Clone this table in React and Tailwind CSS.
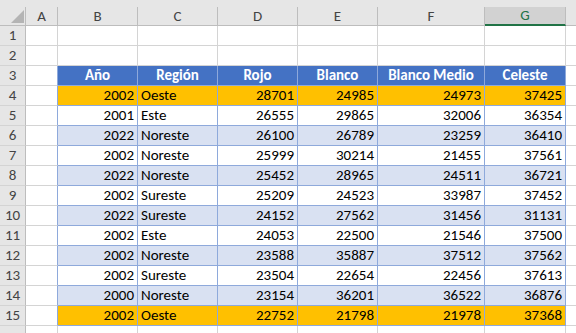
import React from "react";

const FONT = { fontFamily: "Calibri, Carlito, Lato, 'Liberation Sans', sans-serif" };

// column widths incl. right border: row numbers, A..G
const widths = ["w-[26px]", "w-[32px]", "w-[80px]", "w-[80px]", "w-[80px]", "w-[80px]", "w-[107px]", "w-[81px]"];

const letters = ["A", "B", "C", "D", "E", "F", "G"];

const headers = ["Año", "Región", "Rojo", "Blanco", "Blanco Medio", "Celeste"];

const rows = [
  [2002, "Oeste", 28701, 24985, 24973, 37425],
  [2001, "Este", 26555, 29865, 32006, 36354],
  [2022, "Noreste", 26100, 26789, 23259, 36410],
  [2002, "Noreste", 25999, 30214, 21455, 37561],
  [2022, "Noreste", 25452, 28965, 24511, 36721],
  [2002, "Sureste", 25209, 24523, 33987, 37452],
  [2022, "Sureste", 24152, 27562, 31456, 31131],
  [2002, "Este", 24053, 22500, 21546, 37500],
  [2002, "Noreste", 23588, 35887, 37512, 37562],
  [2002, "Sureste", 23504, 22654, 22456, 37613],
  [2000, "Noreste", 23154, 36201, 36522, 36876],
  [2002, "Oeste", 22752, 21798, 21978, 37368],
];

const RowNum = ({ n }) => (
  <div className="w-[26px] h-full shrink-0 flex items-center justify-center bg-[#e6e6e6] text-[#444] border-r border-b border-r-[#bdbdbd] border-b-[#d4d4d4]">
    {n}
  </div>
);

const Empty = ({ w, blueRight }) => (
  <div
    className={`${w} h-full shrink-0 border-b border-r border-b-[#d4d4d4] ${
      blueRight ? "border-r-[#8ea9db]" : "border-r-[#d4d4d4]"
    }`}
  />
);

const BlankRow = ({ n }) => (
  <div className="flex h-[20px]">
    <RowNum n={n} />
    {widths.slice(1).map((w, i) => (
      <Empty key={i} w={w} />
    ))}
    <div className="flex-1 h-full border-b border-[#d4d4d4]" />
  </div>
);

export default function App() {
  return (
    <div className="w-[576px] h-[333px] overflow-hidden bg-white text-[15px] leading-none text-black" style={FONT}>
      {/* column letters */}
      <div className="h-[7px] bg-[#e6e6e6]" />
      <div className="flex h-[19px] bg-[#e6e6e6] text-[#444]">
        <div className="w-[26px] shrink-0 flex items-end justify-end pr-[1px] pb-[2px] border-r border-b border-[#bdbdbd]">
          <svg width="13" height="13" viewBox="0 0 13 13">
            <polygon points="0,13 13,13 13,0" fill="#b4b4b4" />
          </svg>
        </div>
        {letters.map((l, i) =>
          l === "G" ? (
            <div
              key={l}
              className={`${widths[i + 1]} shrink-0 flex items-center justify-center bg-[#d2d2d2] text-[#217346] border-r border-r-[#bdbdbd] border-b-2 border-b-[#217346]`}
            >
              {l}
            </div>
          ) : (
            <div
              key={l}
              className={`${widths[i + 1]} shrink-0 flex items-center justify-center border-r border-b border-[#bdbdbd]`}
            >
              {l}
            </div>
          )
        )}
        <div className="flex-1 border-b border-[#bdbdbd]" />
      </div>

      <BlankRow n={1} />
      <BlankRow n={2} />

      {/* table header */}
      <div className="flex h-[20px]">
        <RowNum n={3} />
        <Empty w={widths[1]} blueRight />
        {headers.map((h, i) => (
          <div
            key={h}
            className={`${widths[i + 2]} shrink-0 flex items-center justify-center font-bold text-white bg-[#4472c4] border-r border-b border-[#8ea9db]`}
          >
            {h}
          </div>
        ))}
        <div className="flex-1 h-full border-b border-[#d4d4d4]" />
      </div>

      {rows.map((r, ri) => {
        const orange = ri === 0 || ri === rows.length - 1;
        const bg = orange ? "bg-[#ffc000]" : ri % 2 === 1 ? "bg-white" : "bg-[#d9e1f2]";
        return (
          <div key={ri} className="flex h-[20px]">
            <RowNum n={ri + 4} />
            <Empty w={widths[1]} blueRight />
            {r.map((v, ci) => (
              <div
                key={ci}
                className={`${widths[ci + 2]} shrink-0 flex items-center ${bg} border-r border-b border-[#8ea9db] ${
                  ci === 1 ? "justify-start pl-[3px]" : "justify-end pr-[3px]"
                }`}
              >
                {v}
              </div>
            ))}
            <div className="flex-1 h-full border-b border-[#d4d4d4]" />
          </div>
        );
      })}

      {/* row 16, cut off by the window */}
      <BlankRow n="" />
    </div>
  );
}
